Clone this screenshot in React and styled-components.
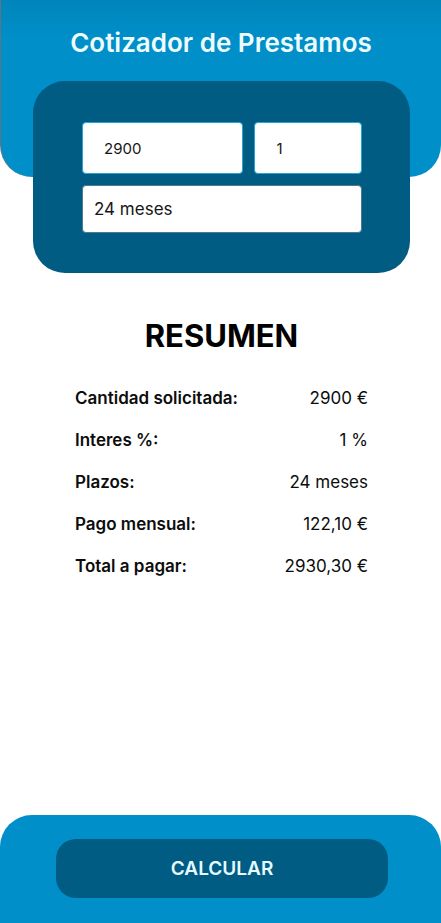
import React, { useState } from "react";
import styled, { createGlobalStyle } from "styled-components";

const GlobalStyle = createGlobalStyle`
  *, *::before, *::after { box-sizing: border-box; }
  body {
    margin: 0;
    background: #fff;
    color: #0c0c0c;
    font-family: Inter, "Liberation Sans", sans-serif;
  }
  button, input, select { font-family: inherit; }
`;

const Page = styled.div`
  min-height: 100vh;
  display: flex;
  flex-direction: column;
`;

const Header = styled.header`
  height: 177px;
  padding-top: 26px;
  border-left: 1px solid #5f7480;
  border-radius: 0 0 32px 32px;
  background: linear-gradient(#0085bb, #008fc9 40px);
  text-align: center;
`;

const Title = styled.h1`
  margin: 0;
  font-size: 26px;
  line-height: 34px;
  font-weight: 600;
  color: #eefcff;
`;

const FormCard = styled.form`
  display: flex;
  flex-direction: column;
  gap: 11px;
  margin: -96px 7% 0 33px;
  padding: 41px 48px 40px 49px;
  border-radius: 32px;
  background: #005c83;
`;

const FieldRow = styled.div`
  display: grid;
  grid-template-columns: 3fr 2fr;
  gap: 11px;
`;

const NumberField = styled.input`
  width: 100%;
  min-width: 0;
  height: 52px;
  padding: 0 21px;
  border: 1px solid #25a5cf;
  border-radius: 4px;
  background: #fff;
  color: #161616;
  font-size: 15px;
`;

const TermSelect = styled.select`
  appearance: none;
  width: 100%;
  height: 48px;
  padding: 0 11px;
  border: 1px solid #4c7b90;
  border-radius: 4px;
  background: #fff;
  color: #161616;
  font-size: 17px;
`;

const Summary = styled.main`
  flex: 1;
  padding: 43px 73px 43px 75px;
`;

const SummaryTitle = styled.h2`
  margin: 0 0 30px;
  font-size: 31px;
  line-height: 40px;
  font-weight: 700;
  color: #000;
  text-align: center;
`;

const SummaryList = styled.dl`
  display: flex;
  flex-direction: column;
  gap: 18px;
  margin: 0;
`;

const SummaryRow = styled.div`
  display: flex;
  justify-content: space-between;
  font-size: 17px;
  line-height: 24px;
  white-space: nowrap;
`;

const Label = styled.dt`
  font-weight: 600;
`;

const Value = styled.dd`
  margin: 0;
`;

const Footer = styled.footer`
  padding: 24px 12% 25px 56px;
  border-radius: 32px 32px 0 0;
  background: #008fc9;
`;

const SubmitButton = styled.button`
  display: block;
  width: 100%;
  height: 59px;
  border: 0;
  border-radius: 20px;
  background: #005c83;
  color: #e6faff;
  font-size: 19px;
  font-weight: 600;
  cursor: pointer;
`;

const TERMS = [3, 6, 12, 24];

const formatAmount = (value) => value.toFixed(2).replace(".", ",");

function computeLoan({ amount, interest, months }) {
  const rate = interest / 100 / 12;
  const monthly =
    rate === 0 ? amount / months : (amount * rate) / (1 - (1 + rate) ** -months);
  return { amount, interest, months, monthly, total: monthly * months };
}

export default function App() {
  const [amount, setAmount] = useState("2900");
  const [interest, setInterest] = useState("1");
  const [months, setMonths] = useState(24);
  const [loan, setLoan] = useState(() =>
    computeLoan({ amount: 2900, interest: 1, months: 24 })
  );

  const handleSubmit = (event) => {
    event.preventDefault();
    setLoan(
      computeLoan({ amount: Number(amount), interest: Number(interest), months })
    );
  };

  const rows = [
    ["Cantidad solicitada:", `${loan.amount} €`],
    ["Interes %:", `${loan.interest} %`],
    ["Plazos:", `${loan.months} meses`],
    ["Pago mensual:", `${formatAmount(loan.monthly)} €`],
    ["Total a pagar:", `${formatAmount(loan.total)} €`],
  ];

  return (
    <>
      <GlobalStyle />
      <Page>
        <Header>
          <Title>Cotizador de Prestamos</Title>
        </Header>
        <FormCard id="loan-form" onSubmit={handleSubmit}>
          <FieldRow>
            <NumberField
              inputMode="decimal"
              aria-label="Cantidad"
              value={amount}
              onChange={(event) => setAmount(event.target.value)}
            />
            <NumberField
              inputMode="decimal"
              aria-label="Interes %"
              value={interest}
              onChange={(event) => setInterest(event.target.value)}
            />
          </FieldRow>
          <TermSelect
            aria-label="Plazos"
            value={months}
            onChange={(event) => setMonths(Number(event.target.value))}
          >
            {TERMS.map((term) => (
              <option key={term} value={term}>
                {term} meses
              </option>
            ))}
          </TermSelect>
        </FormCard>
        <Summary>
          <SummaryTitle>RESUMEN</SummaryTitle>
          <SummaryList>
            {rows.map(([label, value]) => (
              <SummaryRow key={label}>
                <Label>{label}</Label>
                <Value>{value}</Value>
              </SummaryRow>
            ))}
          </SummaryList>
        </Summary>
        <Footer>
          <SubmitButton type="submit" form="loan-form">
            CALCULAR
          </SubmitButton>
        </Footer>
      </Page>
    </>
  );
}
